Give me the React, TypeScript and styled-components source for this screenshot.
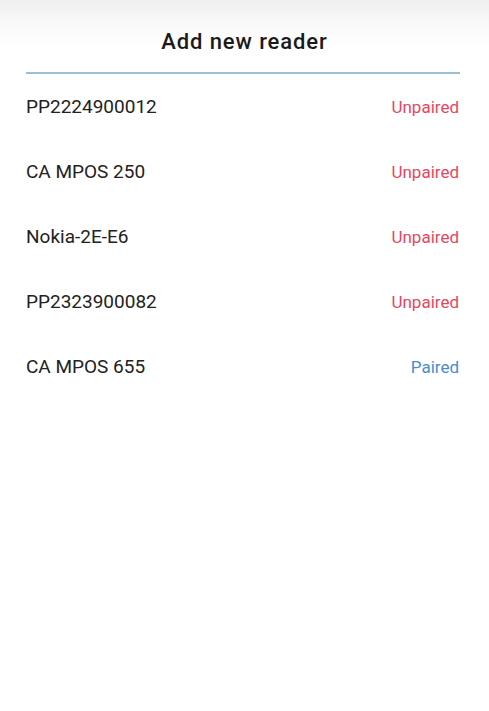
import React from "react";
import styled, { createGlobalStyle } from "styled-components";

const Global = createGlobalStyle`
  html, body { margin: 0; padding: 0; background: #ffffff; }
  body { font-family: Roboto, "Noto Sans", Arial, sans-serif; }
`;

const Page = styled.div`
  width: 489px;
  min-height: 711px;
  background: linear-gradient(to bottom, #efefef 0px, #f7f7f7 18px, #ffffff 48px);
  display: flex;
  flex-direction: column;
`;

const Header = styled.header`
  height: 72px;
  display: flex;
  align-items: center;
  justify-content: center;
  padding-top: 10px;
  box-sizing: border-box;
`;

const Title = styled.h1`
  margin: 0;
  font-size: 22px;
  font-weight: 500;
  letter-spacing: 0.9px;
  color: #1a1a1a;
`;

const Divider = styled.div`
  margin: 0 29px 0 26px;
  height: 2px;
  background: #9dbfd6;
`;

const List = styled.ul`
  list-style: none;
  margin: 0;
  padding: 0 30px 0 26px;
`;

const Row = styled.li`
  height: 65px;
  display: flex;
  align-items: center;
  justify-content: space-between;
`;

const Name = styled.span`
  font-size: 19px;
  color: #222222;
`;

const Status = styled.span<{ $paired: boolean }>`
  font-size: 17px;
  color: ${(p) => (p.$paired ? "#4a8cd1" : "#e6485f")};
`;

const readers = [
  { name: "PP2224900012", paired: false },
  { name: "CA MPOS 250", paired: false },
  { name: "Nokia-2E-E6", paired: false },
  { name: "PP2323900082", paired: false },
  { name: "CA MPOS 655", paired: true },
];

export default function App() {
  return (
    <>
      <Global />
      <Page>
        <Header>
          <Title>Add new reader</Title>
        </Header>
        <Divider />
        <List>
          {readers.map((r) => (
            <Row key={r.name}>
              <Name>{r.name}</Name>
              <Status $paired={r.paired}>{r.paired ? "Paired" : "Unpaired"}</Status>
            </Row>
          ))}
        </List>
      </Page>
    </>
  );
}
